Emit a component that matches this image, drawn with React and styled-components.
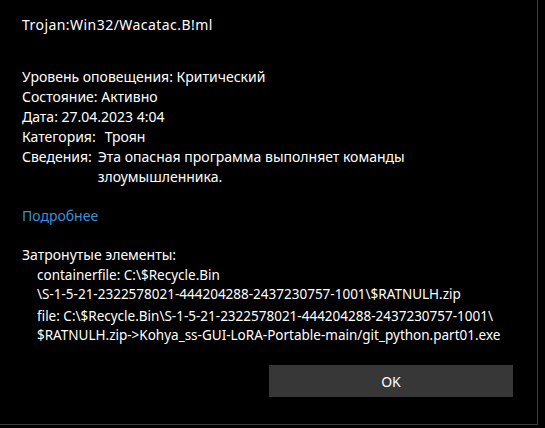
import React from 'react'
import styled, { createGlobalStyle } from 'styled-components'

const GlobalStyle = createGlobalStyle`
    body {
        margin: 0;
        background: #000;
        font-family: "Noto Sans", "Open Sans", sans-serif;
        color: #fff;
    }
`

const Dialog = styled.div`
    width: 538px;
    height: 425px;
    background: #000;
    border-right: 1px solid #3c3c3c;
    border-bottom: 1px solid #3c3c3c;
    display: flex;
    flex-direction: column;
    padding: 15px 0 0 22px;
    box-sizing: border-box;
    font-size: 14px;
    line-height: 20px;
`

const Title = styled.div`
    margin-bottom: 32px;
    letter-spacing: 0.45px;
`

const Line = styled.div`
    display: flex;
`

const Label = styled.span`
    white-space: nowrap;
    margin-right: ${p => p.$gap || 5}px;
`

const Value = styled.span`
    max-width: ${p => p.$max || 'none'};
`

const Link = styled.a`
    color: #3a91da;
    margin-top: 19px;
    text-decoration: none;
    cursor: pointer;
`

const Heading = styled.div`
    margin-top: 19px;
`

const Item = styled.div`
    padding-left: 15px;
    font-size: 13.5px;
    line-height: 19px;
    margin-top: ${p => p.$first ? 1 : 3}px;
`

const Footer = styled.div`
    display: flex;
    justify-content: flex-end;
    padding-right: 24px;
    margin-top: 20px;
`

const Button = styled.button`
    width: 244px;
    height: 32px;
    background: #373737;
    border: none;
    color: #fff;
    font-family: inherit;
    font-size: 14px;
`

export default function App() {
    return (
        <>
            <GlobalStyle />
            <Dialog>
                <Title>Trojan:Win32/Wacatac.B!ml</Title>
                <Line>Уровень оповещения: Критический</Line>
                <Line>Состояние: Активно</Line>
                <Line>Дата: 27.04.2023 4:04</Line>
                <Line><Label $gap={9}>Категория:</Label><Value>Троян</Value></Line>
                <Line>
                    <Label $gap={6}>Сведения:</Label>
                    <Value $max="320px">Эта опасная программа выполняет команды злоумышленника.</Value>
                </Line>
                <Link>Подробнее</Link>
                <Heading>Затронутые элементы:</Heading>
                <Item $first>containerfile: C:\$Recycle.Bin<br />\S-1-5-21-2322578021-444204288-2437230757-1001\$RATNULH.zip</Item>
                <Item>file: C:\$Recycle.Bin\S-1-5-21-2322578021-444204288-2437230757-1001\<br />$RATNULH.zip-&gt;Kohya_ss-GUI-LoRA-Portable-main/git_python.part01.exe</Item>
                <Footer><Button>OK</Button></Footer>
            </Dialog>
        </>
    )
}
